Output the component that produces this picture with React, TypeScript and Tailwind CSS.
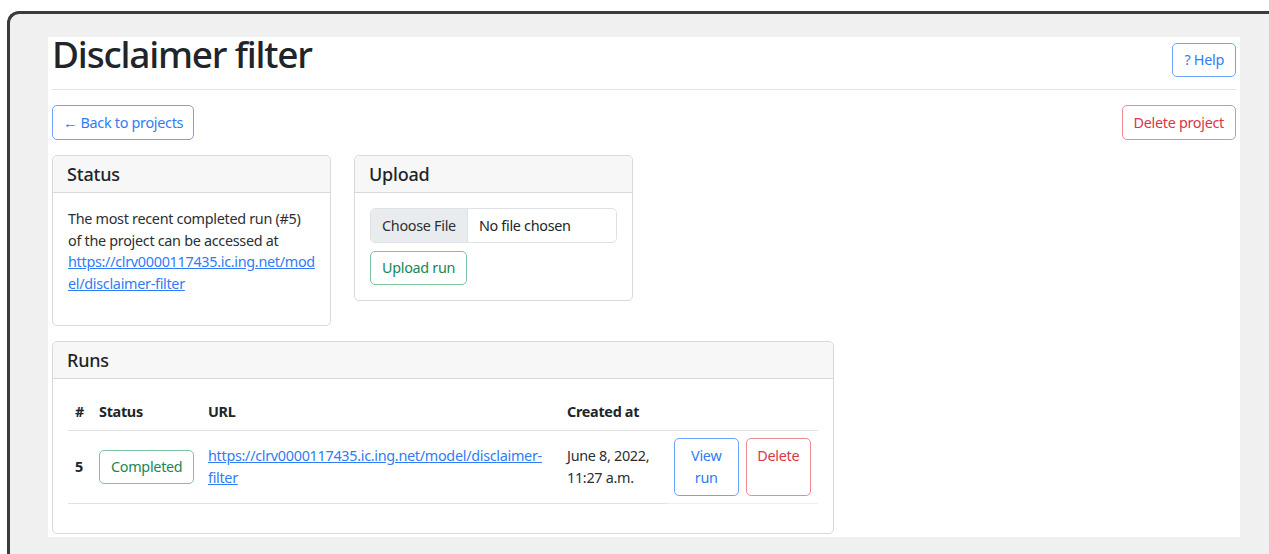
import React from 'react'

const font = { fontFamily: '"Noto Sans", "Open Sans", sans-serif' }

const runs = [
  {
    id: 5,
    status: 'Completed',
    url: 'https://clrv0000117435.ic.ing.net/model/disclaimer-filter',
    createdAt: ['June 8, 2022,', '11:27 a.m.'],
  },
]

function Card({ title, className, children }: { title: string; className?: string; children: React.ReactNode }) {
  return (
    <div className={`border border-[#d9d9d9] rounded-[5px] bg-white ${className ?? ''}`}>
      <div className="bg-[#f7f7f7] border-b border-[#d9d9d9] rounded-t-[5px] px-[14px] py-[7px]">
        <h5 className="text-[18px] leading-[22px] font-medium tracking-[-0.2px] text-[#212529]">{title}</h5>
      </div>
      <div className="p-[15px]">{children}</div>
    </div>
  )
}

export default function App() {
  return (
    <div className="w-full h-[554px] bg-white overflow-hidden text-[#212529]" style={font}>
      {/* window frame */}
      <div className="ml-[7px] mt-[11px] h-[560px] border-l-[3px] border-t-[3px] border-[#3b3b3b] rounded-tl-[12px] bg-[#f0f0f0] pl-[38px] pt-[23px]">
        <div className="w-[1192px] h-[500px] bg-white px-[4px] text-[14.4px] leading-[21.6px] tracking-[-0.3px]">
          {/* Title bar */}
          <div className="flex items-start justify-between h-[53px] border-b border-[#e3e3e3]">
            <h1 className="text-[37px] leading-[40px] font-medium tracking-[-1.2px] text-[#212529] -mt-[3px]">
              Disclaimer filter
            </h1>
            <button className="h-[34px] px-[11px] border border-[#6ea3fb] rounded-[5px] text-[#2f7cf6] mt-[6px]">
              ? Help
            </button>
          </div>

          <div className="flex items-center justify-between mt-[15px]">
            <button className="h-[35px] px-[10px] border border-[#6ea3fb] rounded-[5px] text-[#2f7cf6]">
              ← Back to projects
            </button>
            <button className="h-[35px] px-[11px] border border-[#ec8a94] rounded-[5px] text-[#dc3545]">
              Delete project
            </button>
          </div>

          <div className="flex items-start gap-[23px] mt-[15px]">
            <Card title="Status" className="w-[279px]">
              <p className="mb-[16px] text-[#2b2f33]">
                The most recent completed run (#5) of the project can be accessed at{' '}
                <a href="#" className="text-[#2f7cf6] underline [overflow-wrap:anywhere]">
                  https://clrv0000117435.ic.ing.net/model/disclaimer-filter
                </a>
              </p>
            </Card>

            <Card title="Upload" className="w-[279px]">
              <div className="flex h-[35px] border border-[#dee2e6] rounded-[5px] overflow-hidden">
                <span className="flex items-center px-[11px] bg-[#e9ecef] border-r border-[#dee2e6] text-[#2b2f33]">
                  Choose File
                </span>
                <span className="flex items-center px-[11px]">No file chosen</span>
              </div>
              <button className="mt-[8px] h-[34px] px-[11px] border border-[#7cc3a0] rounded-[5px] text-[#198754]">
                Upload run
              </button>
            </Card>
          </div>

          <Card title="Runs" className="w-[782px] mt-[15px]">
            <table className="w-full table-fixed mb-[14px] border-collapse text-left">
              <thead>
                <tr className="border-b border-[#dee2e6]">
                  <th className="w-[24px] px-[7px] py-[7px] font-bold">#</th>
                  <th className="w-[109px] px-[7px] py-[7px] font-bold">Status</th>
                  <th className="w-[359px] px-[7px] py-[7px] font-bold">URL</th>
                  <th className="w-[107px] px-[7px] py-[7px] font-bold">Created at</th>
                  <th className="px-[7px] py-[7px]"></th>
                </tr>
              </thead>
              <tbody>
                {runs.map((run) => (
                  <tr key={run.id}>
                    <td className="px-[7px] py-[7px] align-middle font-bold border-b border-[#dee2e6]">{run.id}</td>
                    <td className="px-[7px] py-[7px] align-middle border-b border-[#dee2e6]">
                      <span className="inline-flex items-center h-[34px] px-[11px] border border-[#7cc3a0] rounded-[5px] text-[#198754]">
                        {run.status}
                      </span>
                    </td>
                    <td className="px-[7px] py-[7px] align-middle border-b border-[#dee2e6]">
                      <a href="#" className="text-[#2f7cf6] underline">
                        {run.url}
                      </a>
                    </td>
                    <td className="px-[7px] py-[7px] align-middle border-b border-[#dee2e6] text-[#2b2f33]">
                      {run.createdAt[0]}
                      <br />
                      {run.createdAt[1]}
                    </td>
                    <td className="px-[7px] py-[7px] align-middle border-b border-[#eceef0]">
                      <div className="flex gap-[7px]">
                        <button className="w-[65px] px-[10px] py-[6px] border border-[#6ea3fb] rounded-[5px] text-[#2f7cf6] leading-[22px]">
                          View run
                        </button>
                        <button className="w-[66px] px-[8px] py-[6px] border border-[#ec8a94] rounded-[5px] text-[#dc3545] leading-[22px] flex justify-center">
                          Delete
                        </button>
                      </div>
                    </td>
                  </tr>
                ))}
              </tbody>
            </table>
          </Card>
        </div>
      </div>
    </div>
  )
}
